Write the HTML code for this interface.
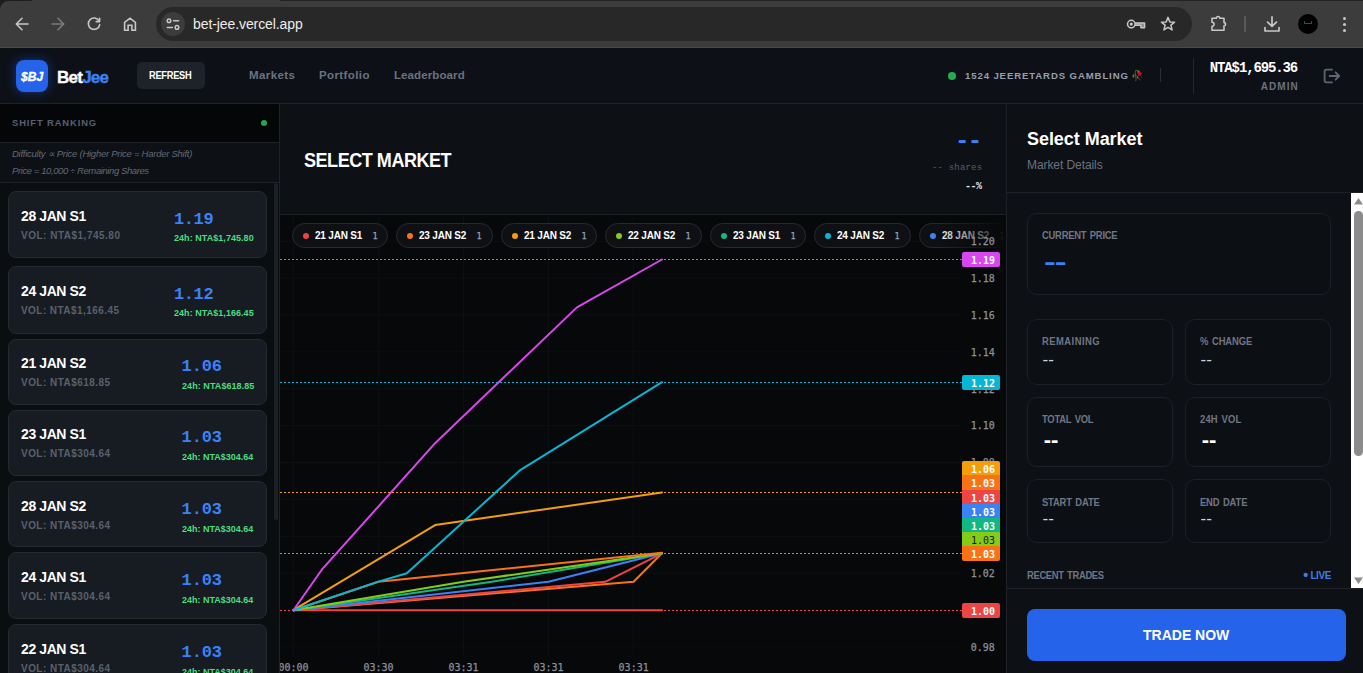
<!DOCTYPE html>
<html lang="en">
<head>
<meta charset="utf-8">
<title>BetJee</title>
<style>
*{box-sizing:border-box;margin:0;padding:0}
html,body{width:1363px;height:673px;overflow:hidden;background:#0d1015;}
body{position:relative;font-family:"Liberation Sans",sans-serif;color:#fff;-webkit-font-smoothing:antialiased}
.abs{position:absolute}
.mono{font-family:"Liberation Mono","DejaVu Sans Mono",monospace}
.t{position:absolute;white-space:nowrap;line-height:1;transform-origin:0 50%}

/* ---------- browser chrome ---------- */
#chrome{position:absolute;left:0;top:0;width:1363px;height:48px;background:#3c3c3c;border-bottom:1px solid #4a4a4a}
#tabstrip-l{position:absolute;left:0;top:0;width:32px;height:1px;background:#1d1f1f;border-radius:0 0 2px 0}
#tabstrip-r{position:absolute;left:280px;top:0;width:1083px;height:1px;background:#222;border-radius:0 0 0 2px}
#omni{position:absolute;left:156px;top:7px;width:1036px;height:34px;border-radius:17px;background:#282828}
#omni .site{position:absolute;left:5px;top:5px;width:24px;height:24px;border-radius:12px;background:#3c3c3c}
#url{left:193px;top:17px;font-size:14px;color:#ececec;letter-spacing:-.09px}

/* ---------- app header ---------- */
#hdr{position:absolute;left:0;top:48px;width:1363px;height:56px;background:#0d1016;border-bottom:1px solid #1e222b}
#logo{position:absolute;left:16px;top:12px;width:32px;height:32px;border-radius:8px;background:#2563eb;box-shadow:0 0 12px rgba(37,99,235,.45)}

.nav{top:21px;font-size:11.5px;font-weight:700;letter-spacing:.4px;color:#6b7280}
/* ---------- sidebar ---------- */
#side{position:absolute;left:0;top:104px;width:280px;height:569px;background:#0b0e11;border-right:1px solid #1e2128;overflow:hidden}
#side .h1{position:absolute;left:0;top:0;width:279px;height:39px;background:#050607;border-bottom:1px solid #1e2128}
#side .h2{position:absolute;left:0;top:39px;width:279px;height:40px;background:#0d1014;border-bottom:1px solid #1e2128}
.card{position:absolute;left:8px;width:259px;background:#171b22;border:1px solid #252a32;border-radius:8px}
.card .nm{left:12px;font-size:14px;font-weight:700;color:#fff}
.card .vol{left:12px;font-size:10px;font-weight:700;color:#58616f;letter-spacing:.5px}
.card .pr{font-size:17px;font-weight:700;color:#3b82f6}
.card .d24{font-size:9px;font-weight:700;color:#4ade80}

/* ---------- chart ---------- */
#chead{position:absolute;left:280px;top:104px;width:726px;height:111px;background:#0d1015;border-bottom:1px solid #1e2128}
#chart{position:absolute;left:280px;top:215px;width:726px;height:458px;background:#07080a;overflow:hidden}
.pill{position:absolute;top:8px;height:25px;border:1px solid #262a31;border-radius:13px;background:#0e1013}
.pill i{position:absolute;left:10px;top:8.5px;width:6px;height:6px;border-radius:3px}
.pb{left:22px;top:7px;font-size:10px;font-weight:700;color:#fff;letter-spacing:-.17px}
.pe{-webkit-text-stroke:.25px;left:79.5px;top:7.5px;font-family:"DejaVu Sans Mono","Liberation Mono",monospace;font-size:8.5px;color:#94a3b8}
.plab{position:absolute;z-index:3;left:682px;width:38px;height:15px;color:#fff;font-family:"DejaVu Sans Mono","Liberation Mono",monospace;font-size:10px;font-weight:700;line-height:15px;text-align:center;letter-spacing:0;padding:1px 0 0 4px;border-radius:2px}
.ax{position:absolute;z-index:2;-webkit-text-stroke:.25px;font-family:"DejaVu Sans Mono","Liberation Mono",monospace;font-size:10px;color:#8a909b;letter-spacing:0;line-height:1;white-space:nowrap}

/* ---------- right panel ---------- */
#rp{position:absolute;left:1006px;top:104px;width:357px;height:569px;background:#0d1015;border-left:1px solid #1e2128}
#rp .hd{position:absolute;left:0;top:0;width:356px;height:89px;border-bottom:1px solid #1e2128}
#rp .ft{position:absolute;left:0;top:484px;width:356px;height:85px;border-top:1px solid #1e2128;background:#0d1015}
.box{position:absolute;border:1px solid #1c2027;border-radius:10px;background:#0c0f13}
.lb{font-size:10px;font-weight:700;color:#6f7685;word-spacing:1.2px;transform:scaleX(.94)}
#btn{position:absolute;left:20px;top:20px;width:319px;height:52px;border-radius:8px;background:#2563eb}
#sb{position:absolute;left:344px;top:89px;width:15px;height:395px;background:#fff}
</style>
</head>
<body>

<!-- ================= BROWSER CHROME ================= -->
<div id="chrome">
  <div id="tabstrip-l"></div><div id="tabstrip-r"></div>
  <svg class="abs" style="left:0;top:0" width="12" height="12" viewBox="0 0 12 12"><path d="M0 0H12V1H8.5A8.5 8.5 0 0 0 0 9.5Z" fill="#1b1e1d"/></svg>
  <div id="omni"><div class="site"></div></div>
  <span class="t" id="url">bet-jee.vercel.app</span>
  <!-- back / forward / reload / home -->
  <svg class="abs" style="left:12px;top:14px" width="20" height="20" viewBox="0 0 20 20" fill="none" stroke="#c7c7c7" stroke-width="1.6" stroke-linecap="round" stroke-linejoin="round"><path d="M16 10H4.6M10 4.3L4.3 10L10 15.7"/></svg>
  <svg class="abs" style="left:48px;top:14px" width="20" height="20" viewBox="0 0 20 20" fill="none" stroke="#7b7b7b" stroke-width="1.6" stroke-linecap="round" stroke-linejoin="round"><path d="M4 10H15.4M10 4.3L15.7 10L10 15.7"/></svg>
  <svg class="abs" style="left:84px;top:14px" width="20" height="20" viewBox="0 0 20 20" fill="none" stroke="#c7c7c7" stroke-width="1.6" stroke-linecap="round" stroke-linejoin="round"><path d="M15.2 7.2A5.7 5.7 0 1 0 15.7 10.6"/><path d="M15.6 4.2V7.6H12.2"/></svg>
  <svg class="abs" style="left:120px;top:14px" width="20" height="20" viewBox="0 0 20 20" fill="none" stroke="#c7c7c7" stroke-width="1.6" stroke-linejoin="miter"><path d="M4.6 16.2V8.4L10 4.2L15.4 8.4V16.2H11.9V11.2H8.1V16.2Z"/></svg>
  <!-- site settings (tune) -->
  <svg class="abs" style="left:163px;top:14px" width="20" height="20" viewBox="0 0 20 20" fill="none" stroke="#c7c7c7" stroke-width="1.5" stroke-linecap="round"><circle cx="6" cy="6.7" r="1.8"/><path d="M10.6 6.7H15.6"/><circle cx="14" cy="13.4" r="1.8"/><path d="M4.4 13.4H9.4"/></svg>
  <!-- key -->
  <svg class="abs" style="left:1126px;top:14px" width="20" height="20" viewBox="0 0 20 20" fill="none" stroke="#c7c7c7" stroke-width="1.5" stroke-linejoin="round"><path d="M8.6 8.9H18.6V13.7H14.9V11.3H8.6" fill="#8a8a8a"/><circle cx="5.3" cy="10.1" r="3.8" fill="#282828"/><circle cx="5.3" cy="10.1" r="1.6" fill="#c7c7c7" stroke="none"/></svg>
  <!-- star -->
  <svg class="abs" style="left:1158px;top:14px" width="20" height="20" viewBox="0 0 20 20" fill="none" stroke="#c7c7c7" stroke-width="1.5" stroke-linejoin="round"><path d="M10.0 3.4L11.8 7.9L16.6 8.2L12.9 11.2L14.1 15.9L10.0 13.3L5.9 15.9L7.1 11.2L3.4 8.2L8.2 7.9Z"/></svg>
  <!-- extension -->
  <svg class="abs" style="left:1208px;top:14px" width="20" height="20" viewBox="0 0 20 20" fill="none" stroke="#c7c7c7" stroke-width="1.6" stroke-linejoin="round"><path d="M4 4.2H8.4A1.7 1.7 0 0 1 11.8 4.2H16V8.6A1.6 1.6 0 0 1 16 11.8V16.2H4V12.4A2.1 2.1 0 0 0 4 8.2Z"/></svg>
  <div class="abs" style="left:1244px;top:16px;width:2px;height:16px;background:#5a5a5a;border-radius:1px"></div>
  <!-- download -->
  <svg class="abs" style="left:1262px;top:14px" width="20" height="20" viewBox="0 0 20 20" fill="none" stroke="#c7c7c7" stroke-width="1.7" stroke-linecap="round" stroke-linejoin="round"><path d="M10 2.8V12.2M5.6 8.2L10 12.4L14.4 8.2"/><path d="M3 13.6V17H17V13.6"/></svg>
  <div class="abs" style="left:1298px;top:14px;width:20px;height:20px;border-radius:10px;background:#000"></div>
  <div class="abs" style="left:1304px;top:21px;width:8px;height:3px;border:1px solid #155a5a;border-top:0;"></div>
  <div class="abs" style="left:1343px;top:17px;width:3px;height:3px;border-radius:2px;background:#c7c7c7;box-shadow:0 6px 0 #c7c7c7,0 12px 0 #c7c7c7"></div>
</div>

<!-- ================= APP HEADER ================= -->
<div id="hdr">
  <div id="logo"><span class="t" id="lg" style="left:5px;top:11.3px;font-size:12px;font-weight:700;font-style:italic;color:#fff;letter-spacing:0.10px;-webkit-text-stroke:.4px">$BJ</span></div>
  <span class="t" id="brand" style="left:57px;top:20.6px;font-size:17px;font-weight:700;letter-spacing:-.76px;color:#fff;-webkit-text-stroke:.35px">Bet<span style="color:#3b82f6">Jee</span></span>
  <div class="abs" style="left:137px;top:14px;width:68px;height:27px;border-radius:5px;background:#1e222b"></div>
  <span class="t" id="refresh" style="left:149px;top:23.0px;font-size:10px;font-weight:700;color:#fff;letter-spacing:-0.3px;transform:scaleX(.93)">REFRESH</span>
  <span class="t nav" id="n1" style="left:249px;top:22.0px">Markets</span>
  <span class="t nav" id="n2" style="left:319px;top:22.0px">Portfolio</span>
  <span class="t nav" id="n3" style="left:394px;top:22.0px;letter-spacing:0.10px">Leaderboard</span>
  <div class="abs" style="left:948px;top:24px;width:8px;height:8px;border-radius:4px;background:#22ad50"></div>
  <span class="t" id="gamb" style="left:965.0px;top:22.5px;font-size:9.6px;font-weight:700;letter-spacing:0.88px;color:#969eac">1524 JEERETARDS GAMBLING</span>
  <span class="t" id="emo" style="left:1130.5px;top:23px;font-size:10px">🥀</span>
  <div class="abs" style="left:1160px;top:20px;width:1px;height:14px;background:#2a2f38"></div>
  <div class="abs" style="left:1193px;top:10px;width:1px;height:36px;background:#23272f"></div>
  <span class="t mono" id="bal" style="left:1209.8px;top:13px;font-size:14px;font-weight:700;color:#fff;letter-spacing:-1.13px">NTA$1,695.36</span>
  <span class="t" id="adm" style="left:1260.8px;top:33.6px;font-size:10px;font-weight:700;letter-spacing:1.03px;color:#6b7280">ADMIN</span>
  <svg class="abs" style="left:1321px;top:18px" width="20" height="20" viewBox="0 0 20 20" fill="none" stroke="#5d6573" stroke-width="1.8" stroke-linecap="round" stroke-linejoin="round"><path d="M11 3.7H5.4A1.8 1.8 0 0 0 3.6 5.5V14.5A1.8 1.8 0 0 0 5.4 16.3H11"/><path d="M8.6 10H18M14.6 6.3L18.2 10L14.6 13.7"/></svg>
</div>

<!-- ================= SIDEBAR ================= -->
<div id="side">
  <div class="h1"></div>
  <div class="h2"></div>
  <span class="t" id="sr" style="left:12px;top:13.6px;font-size:9.4px;font-weight:700;letter-spacing:0.89px;color:#566074">SHIFT RANKING</span>
  <div class="abs" style="left:261px;top:16px;width:6px;height:6px;border-radius:3px;background:#22a850"></div>
  <span class="t" id="f1" style="left:12px;top:44.7px;font-size:9.5px;font-style:italic;color:#606a79;letter-spacing:-0.26px">Difficulty ∝ Price (Higher Price = Harder Shift)</span>
  <span class="t" id="f2" style="left:12px;top:61.8px;font-size:9.5px;font-style:italic;color:#606a79;letter-spacing:-0.41px">Price = 10,000 ÷ Remaining Shares</span>
  <div class="abs" style="left:274px;top:79px;width:4px;height:337px;border-radius:2px;background:#1c2027"></div>
  <div class="card" style="top:87px;height:67px">
    <span class="t nm" id="nm0" style="top:17px;letter-spacing:-0.40px">28 JAN S1</span>
    <span class="t vol" id="vol0" style="top:38.9px;letter-spacing:0.50px">VOL: NTA$1,745.80</span>
    <span class="t pr mono" id="pr0" style="left:165px;top:19.1px;letter-spacing:-0.40px">1.19</span>
    <span class="t d24" id="d240" style="left:165px;top:42px;letter-spacing:0.05px">24h: NTA$1,745.80</span>
  </div>
  <div class="card" style="top:162px;height:68px">
    <span class="t nm" id="nm1" style="top:17px;letter-spacing:-0.40px">24 JAN S2</span>
    <span class="t vol" id="vol1" style="top:39.2px;letter-spacing:0.44px">VOL: NTA$1,166.45</span>
    <span class="t pr mono" id="pr1" style="left:165px;top:19.4px;letter-spacing:-0.40px">1.12</span>
    <span class="t d24" id="d241" style="left:165px;top:42px;letter-spacing:0.05px">24h: NTA$1,166.45</span>
  </div>
  <div class="card" style="top:235px;height:66px">
    <span class="t nm" id="nm2" style="top:16.1px;letter-spacing:-0.40px">21 JAN S2</span>
    <span class="t vol" id="vol2" style="top:38.2px;letter-spacing:0.46px">VOL: NTA$618.85</span>
    <span class="t pr mono" id="pr2" style="left:172.6px;top:18px;letter-spacing:-0.13px">1.06</span>
    <span class="t d24" id="d242" style="left:173.0px;top:42px;letter-spacing:0.07px">24h: NTA$618.85</span>
  </div>
  <div class="card" style="top:306px;height:66px">
    <span class="t nm" id="nm3" style="top:16.3px;letter-spacing:-0.40px">23 JAN S1</span>
    <span class="t vol" id="vol3" style="top:38.4px;letter-spacing:0.46px">VOL: NTA$304.64</span>
    <span class="t pr mono" id="pr3" style="left:172.6px;top:18px;letter-spacing:-0.13px">1.03</span>
    <span class="t d24" id="d243" style="left:173.0px;top:42px">24h: NTA$304.64</span>
  </div>
  <div class="card" style="top:377px;height:66px">
    <span class="t nm" id="nm4" style="top:17.4px;letter-spacing:-0.40px">28 JAN S2</span>
    <span class="t vol" id="vol4" style="top:38.9px;letter-spacing:0.46px">VOL: NTA$304.64</span>
    <span class="t pr mono" id="pr4" style="left:172.6px;top:19.2px;letter-spacing:-0.13px">1.03</span>
    <span class="t d24" id="d244" style="left:173.0px;top:43.0px">24h: NTA$304.64</span>
  </div>
  <div class="card" style="top:448px;height:67px">
    <span class="t nm" id="nm5" style="top:17.0px;letter-spacing:-0.40px">24 JAN S1</span>
    <span class="t vol" id="vol5" style="top:39.4px;letter-spacing:0.46px">VOL: NTA$304.64</span>
    <span class="t pr mono" id="pr5" style="left:172.6px;top:19.0px;letter-spacing:-0.13px">1.03</span>
    <span class="t d24" id="d245" style="left:173.0px;top:42.8px">24h: NTA$304.64</span>
  </div>
  <div class="card" style="top:520px;height:66px">
    <span class="t nm" id="nm6" style="top:16.8px;letter-spacing:-0.40px">22 JAN S1</span>
    <span class="t vol" id="vol6" style="top:39.3px;letter-spacing:0.46px">VOL: NTA$304.64</span>
    <span class="t pr mono" id="pr6" style="left:172.6px;top:18.9px;letter-spacing:-0.13px">1.03</span>
    <span class="t d24" id="d246" style="left:173.0px;top:42.9px">24h: NTA$304.64</span>
  </div>
</div>

<!-- ================= CHART ================= -->
<div id="chead">
  <span class="t" id="sm" style="left:24px;top:46px;font-size:20px;font-weight:700;color:#fff;letter-spacing:-0.5px;transform:scaleX(.9)">SELECT MARKET</span>
  <span class="t mono" id="cd1" style="left:674.9px;top:26.1px;font-size:24px;font-weight:700;color:#3b82f6;letter-spacing:-1.60px">--</span>
  <span class="t mono" id="cd2" style="left:652px;top:60.2px;font-size:9px;color:#565d6b;letter-spacing:0.18px">-- shares</span>
  <span class="t mono" id="cd3" style="left:685px;top:77.9px;font-size:10px;font-weight:700;color:#e5e7eb;letter-spacing:-.5px">--%</span>
</div>
<div id="chart">
  <svg class="abs" style="left:0;top:0" width="726" height="458" viewBox="0 0 726 458" fill="none">
    <path d="M13.4 0V440M98.4 0V440M183.5 0V440M268.5 0V440M353.6 0V440M0 26.3H680M0 63.2H680M0 100.0H680M0 136.9H680M0 173.8H680M0 210.6H680M0 247.5H680M0 284.4H680M0 321.3H680M0 358.1H680M0 395.0H680M0 431.9H680" stroke="#0d0f12" stroke-width="1"/>
    <path d="M0 44.5H682" stroke="#d946ef" stroke-width="1" stroke-dasharray="2 2" shape-rendering="crispEdges"/>
    <path d="M0 167.5H682" stroke="#06b6d4" stroke-width="1" stroke-dasharray="2 2" shape-rendering="crispEdges"/>
    <path d="M0 277.5H682" stroke="#f59e0b" stroke-width="1" stroke-dasharray="2 2" shape-rendering="crispEdges"/>
    <path d="M0 338.5H682" stroke="#f97316" stroke-width="1" stroke-dasharray="2 2" shape-rendering="crispEdges"/>
    <path d="M0 395.5H682" stroke="#ef4444" stroke-width="1" stroke-dasharray="2 2" shape-rendering="crispEdges"/>
    <polyline points="13.4,395.2 382.0,395.2" stroke="#ef4444" stroke-width="2" stroke-linejoin="round" stroke-linecap="round"/>
    <polyline points="13.4,395.2 353.6,366.8 382.0,338.3" stroke="#f97316" stroke-width="2" stroke-linejoin="round" stroke-linecap="round"/>
    <polyline points="13.4,395.2 325.2,366.8 382.0,338.3" stroke="#ef4444" stroke-width="2" stroke-linejoin="round" stroke-linecap="round"/>
    <polyline points="13.4,395.2 268.5,366.8 382.0,338.3" stroke="#3b82f6" stroke-width="2" stroke-linejoin="round" stroke-linecap="round"/>
    <polyline points="13.4,395.2 211.9,366.8 382.0,338.3" stroke="#10b981" stroke-width="2" stroke-linejoin="round" stroke-linecap="round"/>
    <polyline points="13.4,395.2 183.5,366.8 382.0,338.3" stroke="#84cc16" stroke-width="2" stroke-linejoin="round" stroke-linecap="round"/>
    <polyline points="13.4,395.2 98.4,366.8 382.0,337.7" stroke="#f97316" stroke-width="2" stroke-linejoin="round" stroke-linecap="round"/>
    <polyline points="13.4,395.2 155.1,310.1 382.0,277.4" stroke="#f59e0b" stroke-width="2" stroke-linejoin="round" stroke-linecap="round"/>
    <polyline points="13.4,395.2 98.4,366.6 126.8,358.2 240.2,255.1 382.0,167.2" stroke="#06b6d4" stroke-width="2" stroke-linejoin="round" stroke-linecap="round"/>
    <polyline points="13.4,395.2 41.8,354.7 155.1,228.2 296.9,92.4 382.0,44.5" stroke="#d946ef" stroke-width="2" stroke-linejoin="round" stroke-linecap="round"/>
  </svg>
  <span class="ax mono" style="left:690.8px;top:22.0px">1.20</span>
  <span class="ax mono" style="left:690.8px;top:58.9px">1.18</span>
  <span class="ax mono" style="left:690.8px;top:95.7px">1.16</span>
  <span class="ax mono" style="left:690.8px;top:132.6px">1.14</span>
  <span class="ax mono" style="left:690.8px;top:169.5px">1.12</span>
  <span class="ax mono" style="left:690.8px;top:206.3px">1.10</span>
  <span class="ax mono" style="left:690.8px;top:243.2px">1.08</span>
  <span class="ax mono" style="left:690.8px;top:280.1px">1.06</span>
  <span class="ax mono" style="left:690.8px;top:317.0px">1.04</span>
  <span class="ax mono" style="left:690.8px;top:353.8px">1.02</span>
  <span class="ax mono" style="left:690.8px;top:390.7px">1.00</span>
  <span class="ax mono" style="left:690.8px;top:427.6px">0.98</span>
  <span class="ax mono tm" style="left:-1.6px;top:447.5px">00:00</span>
  <span class="ax mono tm" style="left:83.4px;top:447.5px">03:30</span>
  <span class="ax mono tm" style="left:168.5px;top:447.5px">03:31</span>
  <span class="ax mono tm" style="left:253.5px;top:447.5px">03:31</span>
  <span class="ax mono tm" style="left:338.6px;top:447.5px">03:31</span>
  <span class="plab mono" style="top:37.0px;background:#d946ef;color:#fff">1.19</span>
  <span class="plab mono" style="top:160.1px;background:#06b6d4;color:#fff">1.12</span>
  <span class="plab mono" style="top:245.5px;background:#f59e0b;color:#fff;border-radius:2px 2px 0 0">1.06</span>
  <span class="plab mono" style="border-radius:0;top:260.0px;background:#f97316;color:#fff">1.03</span>
  <span class="plab mono" style="border-radius:0;top:274.5px;background:#ef4444;color:#fff">1.03</span>
  <span class="plab mono" style="border-radius:0;top:288.8px;background:#3b82f6;color:#fff">1.03</span>
  <span class="plab mono" style="border-radius:0;top:303.2px;background:#10b981;color:#fff">1.03</span>
  <span class="plab mono" style="border-radius:0;top:317.3px;background:#84cc16;color:#1a1a1a;font-weight:400">1.03</span>
  <span class="plab mono" style="top:331.3px;background:#f97316;color:#fff;border-radius:0 0 2px 2px">1.03</span>
  <span class="plab mono" style="top:387.5px;background:#ef4444;color:#fff">1.00</span>
  <div class="pill" style="left:12px;width:96px"><i style="background:#ef4444"></i><span class="t pb" id="pb0" style="left:22px;top:7px;letter-spacing:-0.2px">21 JAN S1</span><span class="t pe mono">1</span></div>
  <div class="pill" style="left:116px;width:97px"><i style="background:#f97316"></i><span class="t pb" id="pb1" style="left:22px;top:7px;letter-spacing:-0.2px">23 JAN S2</span><span class="t pe mono">1</span></div>
  <div class="pill" style="left:221px;width:96px"><i style="background:#f59e0b"></i><span class="t pb" id="pb2" style="left:22px;top:7px;letter-spacing:-0.2px">21 JAN S2</span><span class="t pe mono">1</span></div>
  <div class="pill" style="left:325px;width:97px"><i style="background:#84cc16"></i><span class="t pb" id="pb3" style="left:22px;top:7px;letter-spacing:-0.2px">22 JAN S2</span><span class="t pe mono">1</span></div>
  <div class="pill" style="left:430px;width:96px"><i style="background:#10b981"></i><span class="t pb" id="pb4" style="left:22px;top:7px;letter-spacing:-0.2px">23 JAN S1</span><span class="t pe mono">1</span></div>
  <div class="pill" style="left:534px;width:97px"><i style="background:#06b6d4"></i><span class="t pb" id="pb5" style="left:22px;top:7px;letter-spacing:-0.2px">24 JAN S2</span><span class="t pe mono">1</span></div>
  <div class="pill" style="left:639px;width:97px"><i style="background:#3b82f6"></i><span class="t pb" id="pb6" style="left:22px;top:7px;letter-spacing:-0.2px">28 JAN S2</span><span class="t pe mono">1</span></div>
  <div class="abs" style="left:655px;top:0;width:71px;height:36px;background:linear-gradient(90deg,rgba(7,8,10,0),rgba(7,8,10,.97))"></div>
</div>

<!-- ================= RIGHT PANEL ================= -->
<div id="rp">
  <div class="hd"></div>
  <span class="t" id="rt" style="left:20px;top:26px;font-size:18px;font-weight:700;color:#fff;letter-spacing:-0.05px">Select Market</span>
  <span class="t" id="rs" style="left:20px;top:55px;font-size:12px;color:#6b7280;letter-spacing:-0.08px">Market Details</span>
  <div class="box" style="left:20px;top:109px;width:304px;height:82px"></div>
  <span class="t lb" id="l0" style="left:35px;top:127.2px;letter-spacing:-0.25px">CURRENT PRICE</span>
  <span class="t" id="v0" style="left:37.2px;top:146.1px;font-size:24px;font-weight:700;color:#3b82f6;letter-spacing:-0.70px;transform:scaleX(1.48)">--</span>
  <div class="box" style="left:20px;top:215px;width:146px;height:66px"></div>
  <span class="t lb" id="l1" style="left:35px;top:232.5px;letter-spacing:0.51px">REMAINING</span>
  <span class="t" id="v1" style="left:35.5px;top:246.9px;font-size:17px;color:#d1d5db;letter-spacing:0px">--</span>
  <div class="box" style="left:178px;top:215px;width:146px;height:66px"></div>
  <span class="t lb" id="l2" style="left:193px;top:232.5px;letter-spacing:-0.08px">% CHANGE</span>
  <span class="t" id="v2" style="left:193.5px;top:246.9px;font-size:17px;color:#d1d5db;letter-spacing:0px">--</span>
  <div class="box" style="left:20px;top:293px;width:146px;height:70px"></div>
  <span class="t lb" id="l3" style="left:35px;top:310.6px;letter-spacing:-0.24px">TOTAL VOL</span>
  <span class="t" id="v3" style="left:36.7px;top:324.5px;font-size:22px;font-weight:700;color:#fff;letter-spacing:0px">--</span>
  <div class="box" style="left:178px;top:293px;width:146px;height:70px"></div>
  <span class="t lb" id="l4" style="left:193px;top:310.6px;letter-spacing:0.17px">24H VOL</span>
  <span class="t" id="v4" style="left:194.7px;top:324.5px;font-size:22px;font-weight:700;color:#fff;letter-spacing:0px">--</span>
  <div class="box" style="left:20px;top:375px;width:146px;height:64px"></div>
  <span class="t lb" id="l5" style="left:35px;top:393.9px;letter-spacing:-0.18px">START DATE</span>
  <span class="t" id="v5" style="left:35.5px;top:406.4px;font-size:17px;color:#d1d5db;letter-spacing:0px">--</span>
  <div class="box" style="left:178px;top:375px;width:146px;height:64px"></div>
  <span class="t lb" id="l6" style="left:193px;top:393.9px;letter-spacing:-0.16px">END DATE</span>
  <span class="t" id="v6" style="left:193.5px;top:406.4px;font-size:17px;color:#d1d5db;letter-spacing:0px">--</span>
  <span class="t lb" id="rtr" style="left:20px;top:466.6px;letter-spacing:-0.35px">RECENT TRADES</span>
  <span class="t" id="live" style="left:296.2px;top:466.9px;font-size:10px;font-weight:700;color:#3b7fe8;letter-spacing:-0.45px"><span style="font-size:14px;line-height:0;position:relative;top:1.6px;letter-spacing:0">•</span> LIVE</span>
  <div id="sb">
    <div class="abs" style="left:3px;top:18px;width:9px;height:245px;border-radius:5px;background:#8b8b8b"></div>
    <svg class="abs" style="left:0;top:0" width="15" height="395" viewBox="0 0 15 395"><path d="M7.5 5L12 11.5H3Z" fill="#8b8b8b"/><path d="M7.5 391L12 384.5H3Z" fill="#8b8b8b"/></svg>
  </div>
  <div class="ft"><div id="btn"><span class="t" id="tn" style="left:116px;top:19px;font-size:14px;font-weight:700;color:#fff">TRADE NOW</span></div></div>
</div>

</body>
</html>
